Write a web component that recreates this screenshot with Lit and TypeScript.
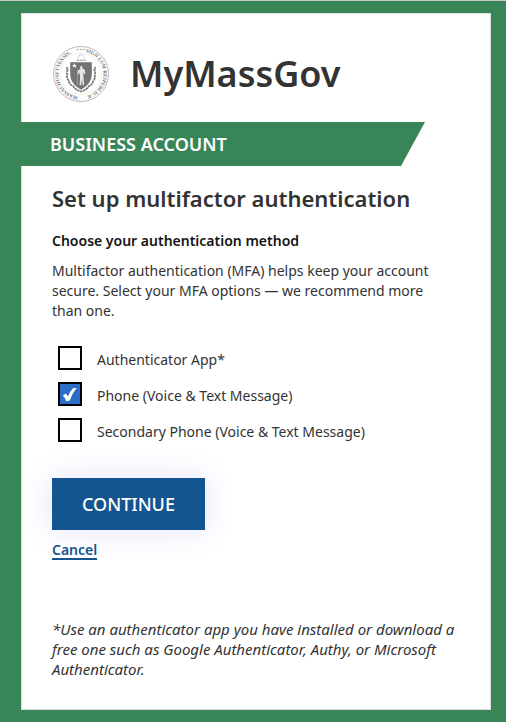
import { LitElement, html, css } from "lit";
import { customElement, state } from "lit/decorators.js";

@customElement("state-seal")
class StateSeal extends LitElement {
  static styles = css`
    :host {
      display: block;
      flex: none;
      width: 58px;
      height: 58px;
    }
    .seal {
      display: block;
      width: 100%;
      height: 100%;
    }
    .legend {
      font-family: "Liberation Serif", serif;
      font-size: 5px;
      font-weight: 700;
      fill: #707070;
    }
  `;

  render() {
    return html`
      <svg class="seal" viewBox="0 0 58 58" role="img" aria-label="State seal">
        <defs>
          <path id="ring" d="M26 51.300 A22.500 22.500 0 1 1 32 51.300 A22.500 22.500 0 0 1 26 51.300" />
        </defs>
        <circle cx="29" cy="29" r="27.500" fill="#fff" stroke="#b8b8b8" stroke-width="1" />
        <circle cx="29" cy="29" r="20.500" fill="none" stroke="#dcdcdc" stroke-width=".5" />
        <text class="legend"><textPath href="#ring">MASSACHUSETTENSIS,<tspan dx="15">SIGILLUM REIPUBLICÆ</tspan></textPath></text>
        <path d="M24.500 4.700q1.500-1 2.500 0M31 4.700q1.500-1 2.500 0M28 4.500h2" fill="none" stroke="#8a8a8a" stroke-width=".8" />
        <path d="M25.500 13.500q1-4 3.500-3.800q3 .2 3.800 3.800" fill="none" stroke="#c4c4c4" stroke-width=".8" />
        <path d="M25 15.200h9" stroke="#858585" stroke-width="1" stroke-dasharray="2 .6" />
        <path
          d="M15.500 22q-1.600 1.500 .3 3q-2 2-.3 4.500q-1.300 4 1.200 6q.5 4 4.300 5.500q2.500 4 8 5.500q5.500-1.500 8-5.500q3.800-1.500 4.300-5.500q2.500-2 1.200-6q1.700-2.500-.3-4.500q1.900-1.500 .3-3"
          fill="none" stroke="#777" stroke-width="1.700" stroke-dasharray="2.600 .5"
        />
        <path d="M18.500 17.500h21v12q0 9-10.500 15q-10.500-6-10.500-15z" fill="#747474" stroke="#626262" stroke-width=".5" />
        <path d="M22.500 18.200l.7 1.700h1.800l-1.400 1.100 .5 1.800-1.600-1.100-1.600 1.100 .5-1.800-1.400-1.100h1.800z" fill="#fff" />
        <path
          d="M28.200 21.500q1-1.500 2.200 0v2l2.300 1 .7 4.500-1 .5-.8-3-.3 4 .5 5 .3 4.800h-1.400l-.8-6-.8 6h-1.600l.5-5.500v-4.500l-.9-3-.8 2.800-.9-.5.700-4 2.100-1.500z"
          fill="#e6e6e6"
        />
        <path d="M25.500 24v16" stroke="#bcbcbc" stroke-width=".5" />
      </svg>
    `;
  }
}

interface Method {
  id: string;
  label: string;
  checked: boolean;
}

@customElement("app-root")
class AppRoot extends LitElement {
  @state() methods: Method[] = [
    { id: "app", label: "Authenticator App*", checked: false },
    { id: "phone", label: "Phone (Voice & Text Message)", checked: true },
    { id: "phone2", label: "Secondary Phone (Voice & Text Message)", checked: false },
  ];

  static styles = css`
    :host {
      display: block;
      box-sizing: border-box;
      min-height: 100vh;
      padding: 12px 15px 11px 21px;
      border-top: 1px solid #c8c8c8;
      background: #388557;
      color: #333;
      font: 14px/20px "Noto Sans", sans-serif;
    }
    .card {
      border: 1px solid #dcdcdc;
      background: #fff;
    }
    .brand {
      display: flex;
      align-items: center;
      gap: 20px;
      padding: 30px 30px 18px;
    }
    .name {
      font-size: 36px;
      line-height: 60px;
      font-weight: 600;
    }
    .ribbon {
      box-sizing: border-box;
      width: 404px;
      max-width: 100%;
      margin-left: -1px;
      padding-left: 29px;
      background: #388557;
      clip-path: polygon(0 0, 100% 0, calc(100% - 24px) 100%, 0 100%);
      color: #fff;
      font-size: 18px;
      line-height: 44px;
      font-weight: 600;
    }
    .content {
      padding: 17px 30px 30px;
    }
    h1,
    h2,
    p {
      margin: 0;
    }
    h1 {
      font-size: 22px;
      line-height: 30px;
      font-weight: 600;
    }
    h2 {
      margin: 18px 0 10px;
      color: #141414;
      font-size: 14px;
      line-height: 20px;
      font-weight: 600;
    }
    .intro {
      padding-right: 10px;
    }
    .methods {
      margin: 25px 0 36px;
      padding: 0 0 0 6px;
      border: 0;
      display: grid;
      gap: 12px;
    }
    .method {
      display: flex;
      gap: 15px;
    }
    .box {
      appearance: none;
      flex: none;
      box-sizing: border-box;
      width: 24px;
      height: 24px;
      margin: 0;
      border: 2px solid #000;
      background: #fff;
    }
    .box:checked {
      background: #2a6ec8
        url("data:image/svg+xml,%3Csvg xmlns='http://www.w3.org/2000/svg' viewBox='0 0 20 20'%3E%3Cpath d='M2.800 11.500L5.800 9.600L8 12.200Q10.500 7 13 4.300L16.600 4Q12.500 9 9.700 16.400L6.400 17.200Q5.200 14 2.800 11.500Z' fill='%23fff'/%3E%3C/svg%3E")
        center / 20px 20px no-repeat;
    }
    .label {
      padding-top: 4px;
    }
    .continue {
      display: block;
      padding: 0 30px;
      border: 0;
      background: #14558f;
      box-shadow: 0 0 30px rgba(60, 90, 220, 0.16);
      color: #fff;
      font: 500 18px/52px "Noto Sans", sans-serif;
    }
    .cancel {
      display: inline-block;
      margin: 11px 0 59px;
      border-bottom: 2px solid #14558f;
      color: #14558f;
      font-weight: 600;
      line-height: 17px;
      text-decoration: none;
    }
    .note {
      font-size: 15px;
      font-style: italic;
    }
  `;

  toggle(id: string) {
    this.methods = this.methods.map((m) => (m.id === id ? { ...m, checked: !m.checked } : m));
  }

  render() {
    return html`
      <main class="card">
        <header class="brand">
          <state-seal></state-seal>
          <div class="name">MyMassGov</div>
        </header>
        <div class="ribbon">BUSINESS ACCOUNT</div>
        <form class="content" @submit=${(e: Event) => e.preventDefault()}>
          <h1>Set up multifactor authentication</h1>
          <h2 id="choose">Choose your authentication method</h2>
          <p class="intro">
            Multifactor authentication (MFA) helps keep your account secure. Select your MFA
            options — we recommend more than one.
          </p>
          <fieldset class="methods" aria-labelledby="choose">
            ${this.methods.map(
              (m) => html`
                <label class="method" for=${m.id}>
                  <input
                    class="box"
                    type="checkbox"
                    id=${m.id}
                    .checked=${m.checked}
                    @change=${() => this.toggle(m.id)}
                  />
                  <span class="label">${m.label}</span>
                </label>
              `
            )}
          </fieldset>
          <button class="continue" type="submit">CONTINUE</button>
          <a class="cancel" href="#">Cancel</a>
          <p class="note">
            *Use an authenticator app you have installed or download a free one such as Google
            Authenticator, Authy, or Microsoft Authenticator.
          </p>
        </form>
      </main>
    `;
  }
}
